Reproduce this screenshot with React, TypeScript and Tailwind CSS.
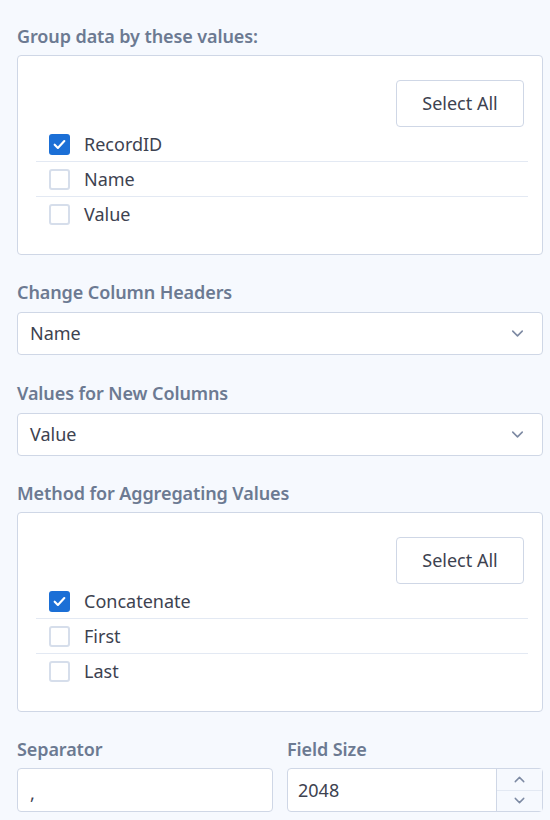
import { ChevronDown, ChevronUp } from "lucide-react";

const font = { fontFamily: '"Noto Sans", "Open Sans", sans-serif' };

function FieldLabel({ text }: { text: string }) {
  return (
    <div className="text-[18px] leading-6 font-semibold tracking-[-0.1px] text-[#6c7a92]">{text}</div>
  );
}

function CheckRow({ label, checked, last }: { label: string; checked?: boolean; last?: boolean }) {
  return (
    <div
      className={`flex h-[35px] items-center gap-[14px] px-[13px] ${
        last ? "" : "border-b border-[#e3e9f3]"
      }`}
    >
      {checked ? (
        <span className="flex h-[21px] w-[21px] items-center justify-center rounded-[3px] bg-[#1b6fd6]">
          <svg width="15" height="15" viewBox="0 0 14 14" fill="none">
            <path d="M2.5 7.2l3 3L11.5 3.8" stroke="white" strokeWidth="2" strokeLinecap="round" strokeLinejoin="round" />
          </svg>
        </span>
      ) : (
        <span className="h-[21px] w-[21px] rounded-[3px] border-2 border-[#d6deeb] bg-white" />
      )}
      <span className="text-[18px] text-[#3d4250]">{label}</span>
    </div>
  );
}

function CheckBox({ items }: { items: { label: string; checked?: boolean }[] }) {
  return (
    <div className="mt-[7px] rounded-[4px] border border-[#cfd7e6] bg-white pb-[22px] pl-[18px] pr-[14px] pt-[24px]">
      <div className="mr-[4px] flex justify-end">
        <button
          type="button"
          className="h-[47px] w-[128px] rounded-[4px] border border-[#cfd7e6] bg-white text-[18px] text-[#3d4250]"
        >
          Select All
        </button>
      </div>
      <div>
        {items.map((item, i) => (
          <CheckRow key={item.label} label={item.label} checked={item.checked} last={i === items.length - 1} />
        ))}
      </div>
    </div>
  );
}

function SelectBox({ value }: { value: string }) {
  return (
    <div className="mt-[8px] flex h-[43px] items-center justify-between rounded-[4px] border border-[#cfd7e6] bg-white pl-[12px] pr-[15px]">
      <span className="text-[18px] text-[#3d4250]">{value}</span>
      <ChevronDown size={19} strokeWidth={2} className="text-[#7d8aa3]" />
    </div>
  );
}

export default function App() {
  return (
    <div className="min-h-[820px] w-[550px] bg-[#f6f9fe] pl-[17px] pr-[7px] pt-[24px]" style={font}>
      <FieldLabel text="Group data by these values:" />
      <CheckBox
        items={[
          { label: "RecordID", checked: true },
          { label: "Name" },
          { label: "Value" },
        ]}
      />

      <div className="mt-[25px]">
        <FieldLabel text="Change Column Headers" />
        <SelectBox value="Name" />
      </div>

      <div className="mt-[26px]">
        <FieldLabel text="Values for New Columns" />
        <SelectBox value="Value" />
      </div>

      <div className="mt-[25px]">
        <FieldLabel text="Method for Aggregating Values" />
        <CheckBox
          items={[
            { label: "Concatenate", checked: true },
            { label: "First" },
            { label: "Last" },
          ]}
        />
      </div>

      <div className="mt-[25px] grid grid-cols-2 gap-[14px]">
        <div>
          <FieldLabel text="Separator" />
          <div className="mt-[7px] flex h-[44px] items-center rounded-[4px] border border-[#cfd7e6] bg-white px-[12px] pt-[6px] text-[18px] text-[#3d4250]">
            ,
          </div>
        </div>
        <div>
          <FieldLabel text="Field Size" />
          <div className="mt-[7px] flex h-[44px] rounded-[4px] border border-[#cfd7e6] bg-white">
            <div className="flex flex-1 items-center px-[10px] text-[18px] text-[#3d4250]">2048</div>
            <div className="flex w-[46px] flex-col border-l border-[#cfd7e6] bg-[#f6f9fe]">
              <div className="flex flex-1 items-center justify-center border-b border-[#e3e9f3]">
                <ChevronUp size={17} strokeWidth={2} className="text-[#7d8aa3]" />
              </div>
              <div className="flex flex-1 items-center justify-center">
                <ChevronDown size={17} strokeWidth={2} className="text-[#7d8aa3]" />
              </div>
            </div>
          </div>
        </div>
      </div>
    </div>
  );
}
